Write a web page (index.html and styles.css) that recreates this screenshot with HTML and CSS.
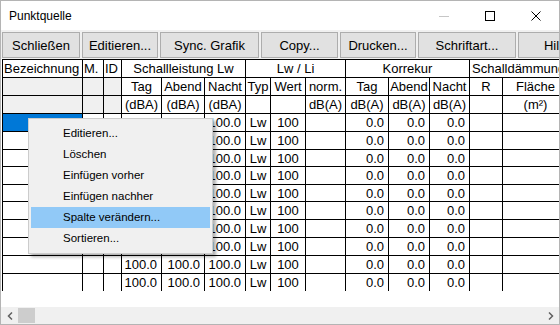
FILE: index.html
```html
<!DOCTYPE html>
<html lang="de">
<head>
  <meta charset="UTF-8">
  <title>Punktquelle</title>
  <link rel="stylesheet" href="styles.css">
</head>
<body>

  <div class="window">
    <div class="titlebar">
      <span class="title">Punktquelle</span>
      <div class="caption-buttons">
        <span class="cap"><svg width="10" height="10" viewBox="0 0 10 10"><path d="M0 5.5h10" stroke="#c6c6c6" stroke-width="1"/></svg></span>
        <span class="cap"><svg width="10" height="10" viewBox="0 0 10 10"><rect x="0.5" y="0.5" width="9" height="9" fill="none" stroke="#000" stroke-width="1"/></svg></span>
        <span class="cap"><svg width="10" height="10" viewBox="0 0 10 10"><path d="M0.5 0.5l9 9M9.5 0.5l-9 9" stroke="#000" stroke-width="1"/></svg></span>
      </div>
    </div>

    <div class="toolbar">
      <button class="tool-btn w-close">Schließen</button>
      <button class="tool-btn w-edit">Editieren...</button>
      <button class="tool-btn w-sync">Sync. Grafik</button>
      <button class="tool-btn w-copy">Copy...</button>
      <button class="tool-btn w-print">Drucken...</button>
      <button class="tool-btn w-font">Schriftart...</button>
      <button class="tool-btn w-help">Hilfe</button>
    </div>

    <div class="grid-view">
      <div class="grid" id="grid">
        <!-- header row 1 -->
        <div class="cell l">Bezeichnung</div>
        <div class="cell l">M.</div>
        <div class="cell l">ID</div>
        <div class="cell c span3">Schallleistung Lw</div>
        <div class="cell c span3">Lw / Li</div>
        <div class="cell c span3">Korrekur</div>
        <div class="cell l span2">Schalldämmung</div>
        <!-- header row 2 -->
        <div class="cell fixed"></div>
        <div class="cell fixed"></div>
        <div class="cell fixed"></div>
        <div class="cell c">Tag</div>
        <div class="cell c">Abend</div>
        <div class="cell c">Nacht</div>
        <div class="cell c">Typ</div>
        <div class="cell c">Wert</div>
        <div class="cell c">norm.</div>
        <div class="cell c">Tag</div>
        <div class="cell c">Abend</div>
        <div class="cell c">Nacht</div>
        <div class="cell c">R</div>
        <div class="cell c">Fläche</div>
        <!-- header row 3 -->
        <div class="cell fixed"></div>
        <div class="cell fixed"></div>
        <div class="cell fixed"></div>
        <div class="cell c">(dBA)</div>
        <div class="cell c">(dBA)</div>
        <div class="cell c">(dBA)</div>
        <div class="cell c"></div>
        <div class="cell c"></div>
        <div class="cell c">dB(A)</div>
        <div class="cell c">dB(A)</div>
        <div class="cell c">dB(A)</div>
        <div class="cell c">dB(A)</div>
        <div class="cell c"></div>
        <div class="cell c">(m²)</div>
      </div>
    </div>

    <div class="hscroll">
      <span class="arrow"><svg width="6" height="8" viewBox="0 0 6 8"><path d="M5 0.5L1.5 4L5 7.5" fill="none" stroke="#606060" stroke-width="1.5"/></svg></span>
      <span class="thumb"></span>
      <span class="track"></span>
      <span class="arrow"><svg width="6" height="8" viewBox="0 0 6 8"><path d="M1 0.5L4.5 4L1 7.5" fill="none" stroke="#606060" stroke-width="1.5"/></svg></span>
    </div>

    <ul class="context-menu">
      <li>Editieren...</li>
      <li>Löschen</li>
      <li>Einfügen vorher</li>
      <li>Einfügen nachher</li>
      <li class="active">Spalte verändern...</li>
      <li>Sortieren...</li>
    </ul>
  </div>

  <script>
    // one line of the table: text and alignment of each column
    const rowTemplate = [
      ['', 'l'], ['', 'l'], ['', 'l'],
      ['100.0', 'r'], ['100.0', 'r'], ['100.0', 'r'],
      ['Lw', 'c'], ['100', 'c'], ['', 'r'],
      ['0.0', 'r'], ['0.0', 'r'], ['0.0', 'r'],
      ['', 'c'], ['', 'c']
    ];
    const rowCount = 10;
    const grid = document.getElementById('grid');

    for (let i = 0; i < rowCount; i++) {
      rowTemplate.forEach(([text, align], col) => {
        const cell = document.createElement('div');
        cell.className = 'cell ' + align;
        if (i === 0 && col === 0) cell.classList.add('selected');
        if (i === rowCount - 1) cell.classList.add('last');
        cell.textContent = text;
        grid.appendChild(cell);
      });
    }
  </script>
</body>
</html>
```

FILE: styles.css
```css
* {
  box-sizing: border-box;
}

body {
  margin: 0;
  background: #fff;
  font-family: "Liberation Sans", Arial, sans-serif;
  color: #000;
}

.window {
  position: relative;
  width: 560px;
  height: 325px;
  border: 1px solid #b4b4b4;
  background: #f0f0f0;
  display: flex;
  flex-direction: column;
  overflow: hidden;
}

/* title bar */
.titlebar {
  height: 29px;
  flex: none;
  background: #fff;
  display: flex;
  align-items: center;
  padding-left: 8px;
  font-size: 12px;
}

.title {
  flex: 1;
}

.caption-buttons {
  display: flex;
  height: 100%;
}

.cap {
  width: 46px;
  display: flex;
  align-items: center;
  justify-content: center;
}

.cap svg {
  display: block;
}

/* button row */
.toolbar {
  height: 29px;
  flex: none;
  display: flex;
  gap: 2px;
  padding: 2px 0 1px 1px;
  overflow: hidden;
}

.tool-btn {
  flex: none;
  height: 26px;
  padding: 0;
  background: #e1e1e1;
  border: 1px solid #adadad;
  font-family: "Liberation Sans", Arial, sans-serif;
  font-size: 13px;
  color: #000;
  white-space: nowrap;
  overflow: hidden;
}

.w-close { width: 78px; }
.w-edit { width: 76px; }
.w-sync { width: 99px; }
.w-copy { width: 77px; }
.w-print { width: 76px; }
.w-font { width: 98px; }
.w-help { width: 78px; }

/* table */
.grid-view {
  height: 248px;
  flex: none;
  background: #fff;
  padding-left: 1px;
  overflow: hidden;
}

.grid {
  display: grid;
  width: max-content;
  grid-template-columns: 80px 21px 18px 40px 43px 41px 25px 35px 40px 43px 41px 40px 33px 66px;
  grid-template-rows: 18px 18px 18px 18px 18px 17px 18px 17px 18px 18px 18px 18px 17px;
  border-left: 1px solid #000;
  border-top: 1px solid #000;
  font-size: 13px;
}

.cell {
  display: flex;
  align-items: center;
  border-right: 1px solid #000;
  border-bottom: 1px solid #000;
  white-space: nowrap;
  overflow: hidden;
  min-width: 0;
}

.cell.l {
  padding-left: 1px;
}

.cell.c {
  justify-content: center;
}

.cell.r {
  justify-content: flex-end;
  padding-right: 4px;
}

.cell.span3 {
  grid-column: span 3;
}

.cell.span2 {
  grid-column: span 2;
  padding-left: 2px;
}

.cell.fixed {
  background: #f0f0f0;
}

.cell.selected {
  background: #0078d7;
}

.cell.last {
  border-bottom: none;
}

/* horizontal scrollbar */
.hscroll {
  height: 17px;
  flex: none;
  display: flex;
  align-items: center;
  background: #f0f0f0;
}

.arrow {
  width: 17px;
  height: 17px;
  display: flex;
  align-items: center;
  justify-content: center;
}

.arrow svg {
  display: block;
}

.thumb {
  width: 17px;
  height: 15px;
  background: #cdcdcd;
}

.track {
  flex: 1;
}

/* context menu */
.context-menu {
  position: absolute;
  left: 27px;
  top: 117px;
  width: 185px;
  height: 136px;
  margin: 0;
  padding: 4px 2px 3px 2px;
  list-style: none;
  background: #f0f0f0;
  border: 1px solid #cccccc;
  box-shadow: 3px 3px 3px rgba(0, 0, 0, 0.3);
  font-size: 11.5px;
}

.context-menu li {
  height: 21px;
  line-height: 21px;
  padding-left: 32px;
  white-space: nowrap;
}

.context-menu li.active {
  background: #91c9f7;
}
```
